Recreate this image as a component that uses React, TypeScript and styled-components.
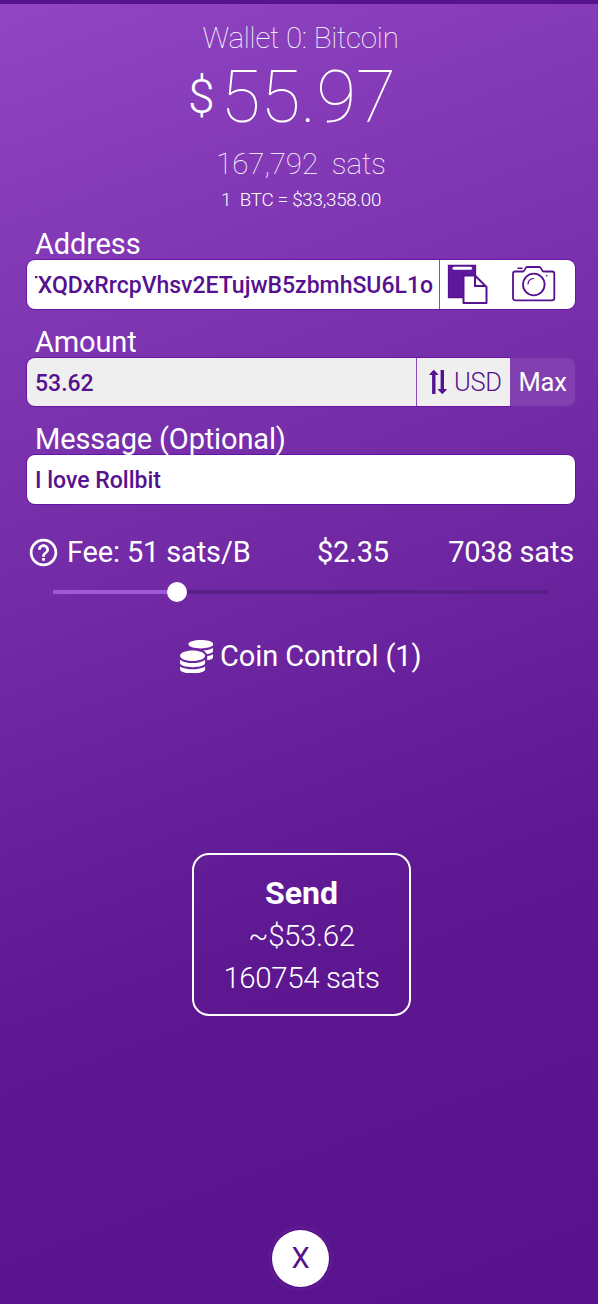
import React from 'react';
import styled, { createGlobalStyle } from 'styled-components';
import { FaCoins } from 'react-icons/fa';
import { MdHelpOutline } from 'react-icons/md';

const PURPLE = '#56118f';

const GlobalStyle = createGlobalStyle`
  * { box-sizing: border-box; }
  body { margin: 0; background: #5a148e; }
`;

const Screen = styled.main`
  width: 598px;
  height: 1304px;
  display: flex;
  flex-direction: column;
  overflow: hidden;
  border-top: 4px solid #57138c;
  background: linear-gradient(160deg, #9045c2 0%, #5d1791 70%, #58128b 100%);
  background-origin: border-box;
  font-family: Roboto, sans-serif;
  color: #fff;
  line-height: 1;
`;

const Text = styled.span<{ $size: number; $weight?: number; $spacing?: number }>`
  font-size: ${p => p.$size}px;
  font-weight: ${p => p.$weight ?? 400};
  letter-spacing: ${p => p.$spacing ?? 0}px;
  white-space: pre;
`;

const Header = styled.header`
  height: 223px;
  display: flex;
  flex-direction: column;
  align-items: center;
`;

const HeaderLine = styled.div<{ $top: number; $height: number; $shift?: number }>`
  display: flex;
  margin-top: ${p => p.$top}px;
  height: ${p => p.$height}px;
  align-items: center;
  padding-left: ${p => p.$shift ?? 0}px;
`;

const Balance = styled(HeaderLine)`
  gap: 6px;
  margin-right: 14px;
`;

const Field = styled.section`
  height: 97.5px;
  padding: 0 23px 0 27px;
`;

const Label = styled.label`
  display: block;
  height: 33px;
  padding: 3px 0 0 8px;
  font-size: 29px;
  line-height: 29px;
  letter-spacing: -0.15px;
  white-space: pre;
`;

const Control = styled.div<{ $muted?: boolean }>`
  display: flex;
  height: 48.5px;
  border-radius: 8px;
  overflow: hidden;
  color: ${PURPLE};
  background: ${p => (p.$muted ? '#efefef' : '#fff')};
  box-shadow: 0 0 0 1px rgba(95, 0, 160, 0.6);
`;

const Value = styled.div`
  flex: 1;
  min-width: 0;
  padding: 3px 6px 0 8px;
  display: flex;
  align-items: center;
`;

const Clip = styled.div`
  width: 100%;
  display: flex;
  justify-content: flex-end;
  overflow: hidden;
  line-height: 30px;
`;

const AddressActions = styled.div`
  width: 136px;
  display: flex;
  border-left: 1px solid #8a4bb8;
  padding: 4px 0 0 7px;
  gap: 24px;
`;

const AmountRow = styled.div`
  display: flex;
`;

const AmountControl = styled(Control)`
  width: 483px;
  border-radius: 8px 0 0 8px;
`;

const Currency = styled.div`
  width: 94px;
  display: flex;
  align-items: center;
  padding: 1px 0 0 12px;
  gap: 7px;
  border-left: 1px solid #8a4bb8;
`;

const MaxButton = styled.button`
  flex: 1;
  height: 48px;
  padding: 0;
  border: 0;
  border-radius: 0 8px 8px 0;
  background: #823fb0;
  color: #fff;
  font-family: inherit;
`;

const FeeRow = styled.div`
  display: flex;
  align-items: center;
  height: 34px;
  margin-top: 16px;
  padding: 0 24px 0 27px;
`;

const FeeRate = styled.div`
  display: flex;
  align-items: center;
  gap: 7px;
  width: 290px;
`;

const FeeTotal = styled.div`
  margin-left: auto;
  display: flex;
`;

const Slider = styled.div`
  display: flex;
  align-items: center;
  height: 20px;
  margin: 12px 49px 0 53px;
`;

const Filled = styled.div`
  width: 114px;
  height: 4px;
  background: #a257d6;
`;

const Thumb = styled.div`
  width: 20px;
  height: 20px;
  border-radius: 50%;
  background: #fff;
`;

const Remaining = styled.div`
  flex: 1;
  height: 4px;
  background: #5c1e87;
`;

const CoinControl = styled.div`
  display: flex;
  align-items: center;
  justify-content: center;
  gap: 7px;
  height: 36px;
  margin-top: 37px;
  padding-left: 3px;
`;

const SendButton = styled.button`
  width: 219px;
  height: 163px;
  margin: 178px 0 0 192px;
  padding: 2px 0 0;
  display: flex;
  flex-direction: column;
  align-items: center;
  justify-content: center;
  gap: 13px;
  border: 2px solid #fff;
  border-radius: 17px;
  background: transparent;
  color: #fff;
  font-family: inherit;
  line-height: 1;
`;

const CloseButton = styled.button`
  width: 57px;
  height: 57px;
  margin: 214px 0 0 272px;
  padding: 0;
  border: 0;
  border-radius: 50%;
  background: #fff;
  color: ${PURPLE};
  font-family: inherit;
  box-shadow: 0 0 0 1px #4e0b83, 0 0 3px 4px rgba(112, 40, 165, 0.35);
`;

const PasteIcon = () => (
  <svg width="41" height="41" viewBox="0 0 41 41" fill="none">
    <path d="M1.500 1.500h27v32h-27z" fill="#5f189b" stroke={PURPLE} strokeWidth="1.3" />
    <path d="M7 4.200h16.500" stroke="#fff" strokeWidth="3" strokeLinecap="round" />
    <path d="M16.500 11.500h11.500l11.500 11.500v16h-23z" fill="#fff" stroke={PURPLE} strokeWidth="2" strokeLinejoin="round" />
    <path d="M28 11.500v10.500h11" stroke={PURPLE} strokeWidth="2" />
  </svg>
);

const CameraIcon = () => (
  <svg width="44" height="41" viewBox="0 0 44 41" fill="none" stroke={PURPLE} strokeWidth="1.8" strokeLinejoin="round" strokeLinecap="round">
    <path d="M3.500 7.500h7.500c2 0 2-4.500 4-4.500h12.500c2 0 2 4.500 4 4.500h8.500a2.300 2.300 0 0 1 2.300 2.300V34a2.300 2.300 0 0 1-2.300 2.300H3.300A2.300 2.300 0 0 1 1 34V9.800A2.300 2.300 0 0 1 3.300 7.500z" />
    <circle cx="21.800" cy="20.500" r="10.800" />
    <path d="M16 20a6 6 0 0 1 5.500-5.500" strokeWidth="1.2" />
    <path d="M6 4.300h4M34.500 11.700h.4" strokeWidth="1.5" />
  </svg>
);

const SwapIcon = () => (
  <svg width="18" height="26" viewBox="0 0 18 26" fill="none" stroke={PURPLE} strokeLinejoin="round">
    <path d="M4.800 25V4M13.300 1v21" strokeWidth="3.4" />
    <path d="M.8 5.500 4.800 1.200l4 4.300zM9.300 20.500l4 4.300 4-4.300z" fill={PURPLE} strokeWidth="1" />
  </svg>
);

export default function App() {
  return (
    <>
      <GlobalStyle />
      <Screen>
        <Header>
          <HeaderLine $top={19} $height={32} $shift={3}>
            <Text $size={29.500} $weight={100} $spacing={-0.25}>Wallet 0: Bitcoin</Text>
          </HeaderLine>
          <Balance $top={5} $height={74}>
            <Text $size={48} $weight={300}>$</Text>
            <Text $size={73} $weight={100}>55.97</Text>
          </Balance>
          <HeaderLine $top={15} $height={32} $shift={4}>
            <Text $size={29.500} $weight={100} $spacing={-0.1}>167,792  sats</Text>
          </HeaderLine>
          <HeaderLine $top={8} $height={22} $shift={4}>
            <Text $size={18.800} $weight={300} $spacing={-0.25}>1  BTC = $33,358.00</Text>
          </HeaderLine>
        </Header>

        <Field>
          <Label>Address</Label>
          <Control>
            <Value>
              <Clip>
                <Text $size={23} $weight={500}>TXQDxRrcpVhsv2ETujwB5zbmhSU6L1o</Text>
              </Clip>
            </Value>
            <AddressActions>
              <PasteIcon />
              <CameraIcon />
            </AddressActions>
          </Control>
        </Field>

        <Field>
          <Label>Amount</Label>
          <AmountRow>
            <AmountControl $muted>
              <Value>
                <Text $size={23} $weight={500}>53.62</Text>
              </Value>
              <Currency>
                <SwapIcon />
                <Text $size={25.500} $weight={300} $spacing={-0.3}>USD</Text>
              </Currency>
            </AmountControl>
            <MaxButton>
              <Text $size={25.500} $spacing={-0.2}>Max</Text>
            </MaxButton>
          </AmountRow>
        </Field>

        <Field>
          <Label>Message (Optional)</Label>
          <Control>
            <Value>
              <Text $size={23} $weight={500}>I love Rollbit</Text>
            </Value>
          </Control>
        </Field>

        <FeeRow>
          <FeeRate>
            <MdHelpOutline size={33} />
            <Text $size={29} $spacing={-0.15}>Fee: 51 sats/B</Text>
          </FeeRate>
          <Text $size={29} $spacing={-0.2}>$2.35</Text>
          <FeeTotal>
            <Text $size={29} $spacing={-0.2}>7038 sats</Text>
          </FeeTotal>
        </FeeRow>

        <Slider>
          <Filled />
          <Thumb />
          <Remaining />
        </Slider>

        <CoinControl>
          <FaCoins size={33.500} />
          <Text $size={29} $spacing={-0.12}>Coin Control (1)</Text>
        </CoinControl>

        <SendButton>
          <Text $size={32} $weight={700}>Send</Text>
          <Text $size={29.500} $weight={300} $spacing={-0.4}>~$53.62</Text>
          <Text $size={29.500} $weight={300} $spacing={-0.4}>160754 sats</Text>
        </SendButton>

        <CloseButton>
          <Text $size={29}>X</Text>
        </CloseButton>
      </Screen>
    </>
  );
}
